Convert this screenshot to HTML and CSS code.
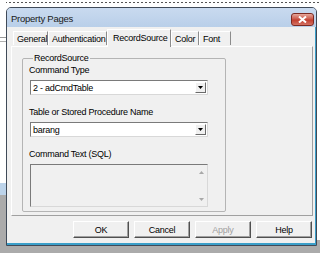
FILE: index.html
```html
<!DOCTYPE html>
<html lang="en">
<head>
    <meta charset="UTF-8">
    <title>Property Pages</title>
    <link rel="stylesheet" href="styles.css">
</head>
<body>
    <div class="desk">
        <div class="dialog">
            <div class="titlebar">
                <span class="title">Property Pages</span>
                <span class="close">
                    <svg width="9" height="7" viewBox="0 0 9 7"><path d="M1 0.5 L8 6.5 M8 0.5 L1 6.5" stroke="#fff" stroke-width="2"/></svg>
                </span>
            </div>
            <div class="client">
                <div class="tabs">
                    <span class="tab tab-general">General</span>
                    <span class="tab tab-auth">Authentication</span>
                    <span class="tab tab-record active">RecordSource</span>
                    <span class="tab tab-color">Color</span>
                    <span class="tab tab-font">Font</span>
                </div>
                <div class="panel">
                    <fieldset class="group">
                        <legend>RecordSource</legend>
                        <div class="lbl">Command Type</div>
                        <div class="combo">
                            <span class="val">2 - adCmdTable</span>
                            <span class="drop"><svg width="5" height="3" viewBox="0 0 5 3"><path d="M0 0 H5 L2.5 3 Z" fill="#000"/></svg></span>
                        </div>
                        <div class="lbl lbl-gap">Table or Stored Procedure Name</div>
                        <div class="combo">
                            <span class="val">barang</span>
                            <span class="drop"><svg width="5" height="3" viewBox="0 0 5 3"><path d="M0 0 H5 L2.5 3 Z" fill="#000"/></svg></span>
                        </div>
                        <div class="lbl lbl-gap">Command Text (SQL)</div>
                        <div class="memo">
                            <div class="memo-text"></div>
                            <div class="vscroll">
                                <svg width="5" height="3" viewBox="0 0 5 3"><path d="M0 3 H5 L2.5 0 Z" fill="#a8a8a8"/></svg>
                                <svg width="5" height="3" viewBox="0 0 5 3"><path d="M0 0 H5 L2.5 3 Z" fill="#a8a8a8"/></svg>
                            </div>
                        </div>
                    </fieldset>
                </div>
                <div class="buttons">
                    <button class="btn">OK</button>
                    <button class="btn">Cancel</button>
                    <button class="btn" disabled>Apply</button>
                    <button class="btn">Help</button>
                </div>
            </div>
        </div>
    </div>
</body>
</html>
```

FILE: styles.css
```css
/* Janela "Property Pages" estilo Windows 7 basico */
body {
    margin: 0;
    font-family: 'Liberation Sans', Arial, sans-serif;
    font-size: 9px;
    letter-spacing: -0.25px;
    color: #000;
}
.desk {
    width: 320px;
    height: 253px;
    box-sizing: border-box;
    padding: 7px 3px 7px 6px;
    display: flex;
    background:
        linear-gradient(#ffffff 0 37px, #9a9a9a 37px 38px, #fff 38px 41px, #b0b0b0 41px 42px, #fff 42px 183px, #bcd3ea 183px 195px, #ababab 195px) 0 0 / 6px 100% no-repeat,
        radial-gradient(circle, #555 0.6px, transparent 0.9px) 0 0 / 4px 5px repeat-x,
        linear-gradient(#ffffff 0 240px, #ababab 240px);
}
.dialog {
    flex: 1;
    display: flex;
    flex-direction: column;
    border: 1px solid #404a58;
    border-radius: 5px 5px 0 0;
    background: #c4d6ec;
}
.titlebar {
    height: 19px;
    display: flex;
    align-items: center;
    justify-content: space-between;
    padding: 0 2px 0 4px;
    background: linear-gradient(#c9daef, #b9cfe9);
    border-radius: 4px 4px 0 0;
}
.title {
    font-size: 9.5px;
    color: #1a1a1a;
    margin-top: 2px;
}
.close {
    width: 21px;
    height: 11px;
    margin-top: 3px;
    display: flex;
    align-items: center;
    justify-content: center;
    border: 1px solid #7c2a22;
    border-radius: 3px;
    background: linear-gradient(#e6a89c, #cc5a4b 45%, #c23f2f 55%, #d47264);
}
.client {
    flex: 1;
    display: flex;
    flex-direction: column;
    background: #f0f0f0;
    padding: 0 2px 0 4px;
    border-right: 1px solid #3b9fc9;
    border-bottom: 2px solid #3b9fc9;
}

/* abas */
.tabs {
    height: 19px;
    display: flex;
    align-items: flex-end;
    padding-left: 2px;
    position: relative;
    z-index: 1;
}
.tab {
    height: 14px;
    line-height: 14px;
    box-sizing: border-box;
    padding-left: 3px;
    white-space: nowrap;
    border-top: 1px solid #fff;
    border-left: 1px solid #fff;
    border-right: 1px solid #8c8c8c;
    margin-bottom: 1px;
}
.tab-general { width: 35px; }
.tab-auth { width: 59px; }
.tab-record { width: 64px; }
.tab-color { width: 28px; }
.tab-font { width: 32px; }
.tab.active {
    height: 18px;
    line-height: 16px;
    margin-bottom: -1px;
    padding-left: 5px;
    background: #f0f0f0;
    border-right: 1px solid #8c8c8c;
}

.panel {
    height: 170px;
    box-sizing: border-box;
    border-top: 1px solid #fff;
    border-left: 1px solid #fff;
    border-right: 1px solid #a0a0a0;
    border-bottom: 1px solid #a0a0a0;
    padding: 6px 0 0 10px;
}
.group {
    margin: 0;
    width: 204px;
    height: 159px;
    box-sizing: border-box;
    padding: 0 0 0 6px;
    border: 1px solid #b4b4b4;
    border-radius: 2px;
}
.group legend {
    padding: 0 1px;
    margin-left: 4px;
    line-height: 11px;
}
.lbl {
    line-height: 12px;
    margin-top: 0;
}
.lbl-gap { margin-top: 11px; }
.combo {
    width: 178px;
    height: 15px;
    margin: 4px 0 0 1px;
    box-sizing: border-box;
    display: flex;
    align-items: center;
    justify-content: space-between;
    background: #fff;
    border: 1px solid #7a7a7a;
    border-right-color: #d8d8d8;
    border-bottom-color: #d8d8d8;
}
.val {
    padding-left: 2px;
}
.drop {
    width: 11px;
    height: 11px;
    margin-right: 1px;
    display: flex;
    align-items: center;
    justify-content: center;
    background: #f0f0f0;
    border: 1px solid #fff;
    border-right-color: #6a6a6a;
    border-bottom-color: #6a6a6a;
    box-sizing: border-box;
}
.memo {
    width: 178px;
    height: 43px;
    margin: 4px 0 0 1px;
    box-sizing: border-box;
    display: flex;
    background: #f0f0f0;
    border: 1px solid #7a7a7a;
    border-right-color: #d8d8d8;
    border-bottom-color: #d8d8d8;
}
.memo-text { flex: 1; }
.vscroll {
    width: 12px;
    display: flex;
    flex-direction: column;
    justify-content: space-between;
    align-items: center;
    padding: 6px 0 5px;
}

/* botoes */
.buttons {
    flex: 1;
    display: flex;
    justify-content: flex-end;
    gap: 5px;
    padding: 5px 1px 0 0;
}
.btn {
    width: 56px;
    height: 17px;
    padding: 0;
    font-family: inherit;
    font-size: 9px;
    letter-spacing: -0.25px;
    color: #000;
    background: #f0f0f0;
    border: 1px solid #fff;
    border-right-color: #505050;
    border-bottom-color: #505050;
    box-shadow: inset -1px -1px 0 #a0a0a0;
}
.btn:disabled {
    color: #a0a0a0;
}
```
